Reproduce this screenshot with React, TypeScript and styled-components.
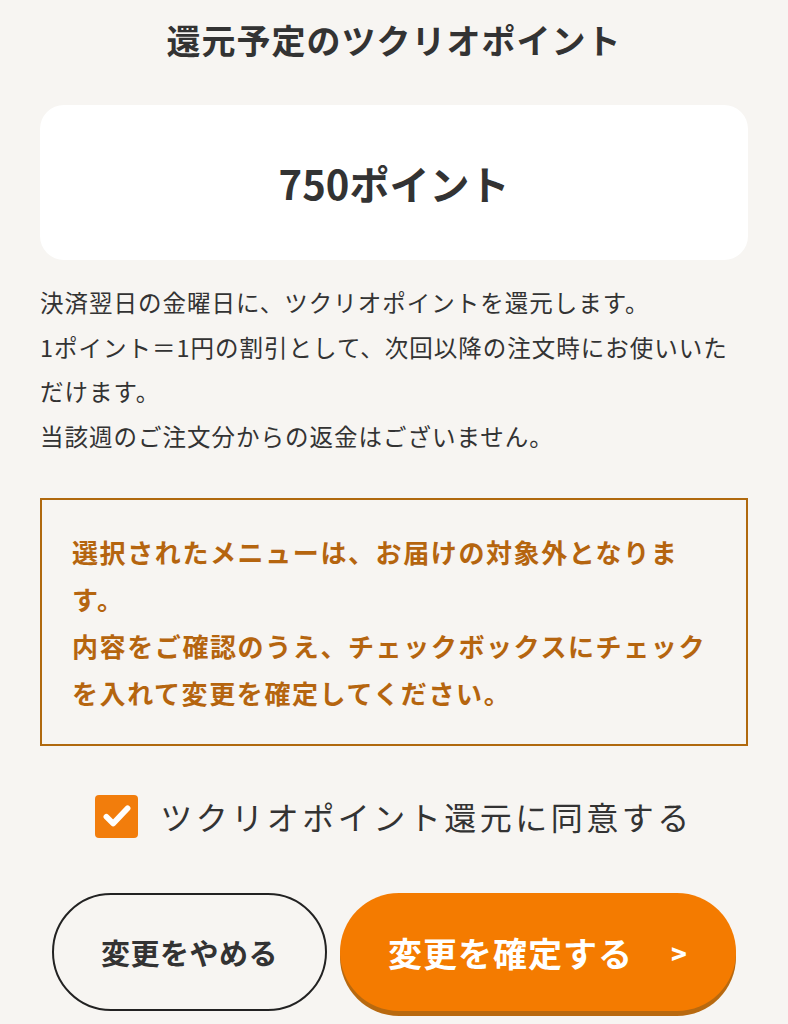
import styled, { createGlobalStyle } from "styled-components";

const GlobalStyle = createGlobalStyle`
  * { box-sizing: border-box; }
  body {
    margin: 0;
    background-color: #f7f5f2;
    font-family: "Noto Sans CJK JP", "Noto Sans", sans-serif;
    color: #333333;
  }
`;

const Page = styled.div`
  width: 788px;
  height: 1024px;
  overflow: hidden;
  padding: 14px 40px 0;
  display: flex;
  flex-direction: column;
`;

const Title = styled.h1`
  margin: 0;
  text-align: center;
  font-size: 34px;
  line-height: 51px;
  font-weight: 700;
  letter-spacing: 1px;
  color: #333333;
`;

const PointCard = styled.div`
  margin-top: 40px;
  height: 155px;
  background-color: #ffffff;
  border-radius: 24px;
  display: flex;
  align-items: center;
  justify-content: center;
  font-size: 40px;
  font-weight: 700;
  color: #333333;
`;

const Notes = styled.p`
  margin: 20px 0 0;
  font-size: 23.5px;
  line-height: 44.5px;
  letter-spacing: 1px;
  color: #333333;
`;

const Warning = styled.div`
  margin-top: 40px;
  border: 2px solid #b0690e;
  padding: 28px 30px;
  font-size: 26px;
  line-height: 47px;
  font-weight: 700;
  letter-spacing: 1.6px;
  color: #b5650f;
`;

const AgreeRow = styled.label`
  margin-top: 46px;
  height: 48px;
  display: flex;
  align-items: center;
  justify-content: center;
  gap: 22px;
  font-size: 32px;
  letter-spacing: 3.5px;
  color: #333333;
`;

const CheckBox = styled.span`
  width: 43px;
  height: 43px;
  border-radius: 4px;
  background-color: #f27d0c;
  display: flex;
  align-items: center;
  justify-content: center;
`;

const ButtonRow = styled.div`
  margin-top: 53px;
  padding: 0 12px;
  display: flex;
  gap: 13px;
`;

const Button = styled.button<{ $primary?: boolean }>`
  height: 118px;
  border-radius: 59px;
  font-family: inherit;
  font-weight: 700;
  display: flex;
  align-items: center;
  justify-content: center;
  cursor: pointer;
  width: ${(p) => (p.$primary ? "396px" : "275px")};
  font-size: ${(p) => (p.$primary ? "34px" : "29px")};
  letter-spacing: ${(p) => (p.$primary ? "1px" : "0.5px")};
  color: ${(p) => (p.$primary ? "#ffffff" : "#333333")};
  background-color: ${(p) => (p.$primary ? "#f47b00" : "#f7f5f2")};
  border: ${(p) => (p.$primary ? "none" : "2px solid #222222")};
  box-shadow: ${(p) => (p.$primary ? "0 5px 0 #b8690f" : "none")};
`;

const Arrow = styled.span`
  margin-left: 38px;
  font-size: 26px;
  font-weight: 900;
`;

export default function App() {
  return (
    <>
      <GlobalStyle />
      <Page>
        <Title>還元予定のツクリオポイント</Title>
        <PointCard>750ポイント</PointCard>
        <Notes>
          決済翌日の金曜日に、ツクリオポイントを還元します。
          <br />
          1ポイント＝1円の割引として、次回以降の注文時にお使いいただけます。
          <br />
          当該週のご注文分からの返金はございません。
        </Notes>
        <Warning>
          選択されたメニューは、お届けの対象外となります。
          <br />
          内容をご確認のうえ、チェックボックスにチェックを入れて変更を確定してください。
        </Warning>
        <AgreeRow>
          <CheckBox>
            <svg width="34" height="34" viewBox="0 0 24 24" fill="none">
              <path
                d="M4.5 12.5l4.8 4.8L19.5 6.5"
                stroke="#ffffff"
                strokeWidth="4"
                strokeLinecap="round"
                strokeLinejoin="round"
              />
            </svg>
          </CheckBox>
          ツクリオポイント還元に同意する
        </AgreeRow>
        <ButtonRow>
          <Button>変更をやめる</Button>
          <Button $primary>
            変更を確定する
            <Arrow>&gt;</Arrow>
          </Button>
        </ButtonRow>
      </Page>
    </>
  );
}
